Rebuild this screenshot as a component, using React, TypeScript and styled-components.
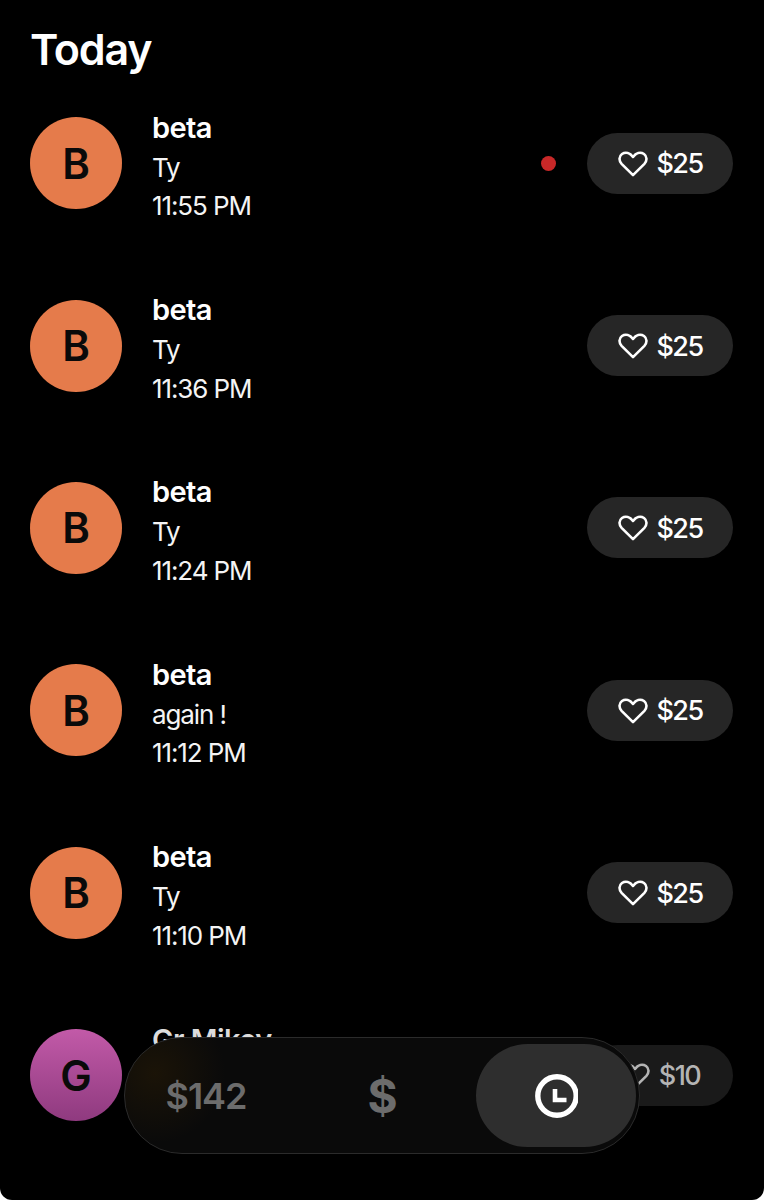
import { createGlobalStyle, styled } from "styled-components"

const GlobalStyle = createGlobalStyle`
  html, body {
    margin: 0;
    padding: 0;
    background: #fff;
  }
  body {
    font-family: Inter, "Liberation Sans", sans-serif;
  }
`

const Screen = styled.div`
  position: relative;
  width: 764px;
  height: 1200px;
  overflow: hidden;
  background: #000;
  color: #fff;
  border-radius: 0 0 12px 12px;
`

const Title = styled.h1`
  margin: 0;
  height: 72px;
  padding: 25px 0 0 30px;
  box-sizing: border-box;
  font-size: 43px;
  line-height: 48px;
  font-weight: 600;
  letter-spacing: -1.2px;
`

const Row = styled.div`
  display: flex;
  align-items: center;
  height: 182.4px;
  padding: 0 31px 0 30px;
`

const Avatar = styled.div<{ $gradient: string }>`
  flex: none;
  display: flex;
  align-items: center;
  justify-content: center;
  width: 92px;
  height: 92px;
  margin-right: 30px;
  border-radius: 50%;
  background: ${props => props.$gradient};
  color: #0a0a0a;
  font-size: 42px;
  font-weight: 600;
`

const Details = styled.div`
  flex: 1;
  display: flex;
  flex-flow: column;
  padding-top: 6px;
`

const Name = styled.div<{ $dim?: boolean }>`
  height: 42px;
  font-size: 29px;
  line-height: 41px;
  font-weight: 600;
  letter-spacing: -0.6px;
  color: ${props => (props.$dim ? "#dcdcdc" : "#fff")};
`

const Line = styled.div`
  height: 38.5px;
  font-size: 26px;
  line-height: 38.5px;
  font-weight: 400;
  letter-spacing: -1.1px;
  color: #f4f4f4;
`

const UnreadDot = styled.span`
  flex: none;
  width: 15px;
  height: 15px;
  margin-right: 31px;
  border-radius: 50%;
  background: #c82828;
`

const TipButton = styled.button<{ $dim?: boolean }>`
  flex: none;
  display: flex;
  align-items: center;
  justify-content: center;
  gap: 9px;
  width: 146px;
  height: 61px;
  padding: 1px 0 0;
  border: 0;
  border-radius: 31px;
  background: ${props => (props.$dim ? "#1a1a1a" : "#262626")};
  color: ${props => (props.$dim ? "#b4b4b4" : "#fff")};
  font-family: inherit;
  font-size: 27px;
  font-weight: 500;
  letter-spacing: -1.6px;
`

const TabBar = styled.nav`
  position: absolute;
  left: 124px;
  top: 1037px;
  box-sizing: border-box;
  display: flex;
  gap: 14px;
  width: 516px;
  height: 117px;
  padding: 6px 3px;
  border: 1px solid #2b2b2b;
  border-radius: 58px;
  background:
    radial-gradient(ellipse 70px 70px at 30px 35px, rgba(70, 45, 0, 0.28), transparent),
    #0a0a0a;
`

const Tab = styled.div<{ $active?: boolean; $size: number; $weight: number; $shift?: number }>`
  flex: none;
  box-sizing: border-box;
  display: flex;
  align-items: center;
  justify-content: center;
  width: 160px;
  padding-right: ${props => props.$shift ?? 0}px;
  border-radius: 52px;
  background: ${props => (props.$active ? "#2e2e2e" : "transparent")};
  color: #6c6c6c;
  font-size: ${props => props.$size}px;
  font-weight: ${props => props.$weight};
  letter-spacing: -1px;
`

const HeartIcon = () => (
  <svg width="30" height="26" viewBox="0 0 30 26" fill="none" stroke="currentColor" strokeWidth="2.6" strokeLinejoin="round">
    <path d="M15 24.2 L3.6 12.8 C0.6 9.6 1 5.2 4 3 C7.5 0.7 12 1.8 15 6 C18 1.8 22.5 0.7 26 3 C29 5.2 29.4 9.6 26.4 12.8 Z" />
  </svg>
)

const ClockIcon = () => (
  <svg width="44" height="44" viewBox="0 0 44 44" fill="none" stroke="#fff">
    <circle cx="23" cy="22" r="19.2" strokeWidth="5.4" />
    <path d="M21 15 V26 H32.5" strokeWidth="4.6" />
  </svg>
)

const orange = "#e57b4b"
const purple = "linear-gradient(180deg, #c25aa8, #8f3a7f)"

const items = [
  { message: "Ty", time: "11:55 PM", unread: true },
  { message: "Ty", time: "11:36 PM" },
  { message: "Ty", time: "11:24 PM" },
  { message: "again !", time: "11:12 PM" },
  { message: "Ty", time: "11:10 PM" },
]

export default function App() {
  return (
    <Screen>
      <GlobalStyle />
      <Title>Today</Title>
      {items.map(item => (
        <Row key={item.time}>
          <Avatar $gradient={orange}>B</Avatar>
          <Details>
            <Name>beta</Name>
            <Line>{item.message}</Line>
            <Line>{item.time}</Line>
          </Details>
          {item.unread && <UnreadDot />}
          <TipButton>
            <HeartIcon />
            $25
          </TipButton>
        </Row>
      ))}
      <Row>
        <Avatar $gradient={purple}>G</Avatar>
        <Details>
          <Name $dim>Gr Mikey</Name>
          <Line />
          <Line />
        </Details>
        <TipButton $dim>
          <HeartIcon />
          $10
        </TipButton>
      </Row>
      <TabBar>
        <Tab $size={36} $weight={600} $shift={4}>$142</Tab>
        <Tab $size={46} $weight={700}>$</Tab>
        <Tab $active $size={36} $weight={600}>
          <ClockIcon />
        </Tab>
      </TabBar>
    </Screen>
  )
}
